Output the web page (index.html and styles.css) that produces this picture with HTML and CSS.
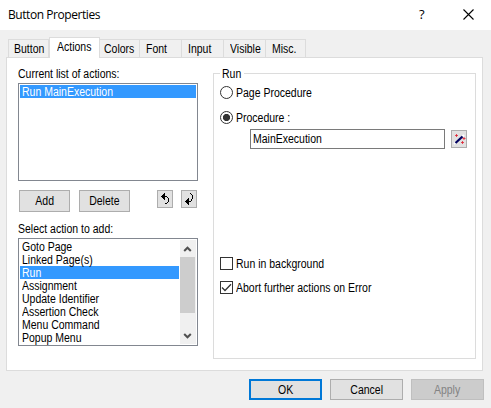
FILE: index.html
```html
<!DOCTYPE html>
<html lang="en">
<head>
<meta charset="utf-8">
<title>Button Properties</title>
<link rel="stylesheet" href="styles.css">
</head>
<body>
<div class="dialog">
  <header class="titlebar">
    <span class="title">Button Properties</span>
    <span class="help">?</span>
    <svg class="close" width="11" height="11" viewBox="0 0 11 11"><path d="M.5.5l10 10M10.5.5l-10 10"/></svg>
  </header>
  <nav class="tabs">
    <div class="tab tab-button"><span class="t">Button</span></div>
    <div class="tab active"><span class="t">Actions</span></div>
    <div class="tab tab-colors"><span class="t">Colors</span></div>
    <div class="tab tab-font"><span class="t">Font</span></div>
    <div class="tab tab-input"><span class="t">Input</span></div>
    <div class="tab tab-visible"><span class="t">Visible</span></div>
    <div class="tab tab-misc"><span class="t">Misc.</span></div>
  </nav>
  <main class="panel">
    <section class="left">
      <div class="label"><span class="t">Current list of actions:</span></div>
      <div class="list current">
        <div class="row selected"><span class="t">Run MainExecution</span></div>
      </div>
      <div class="tools">
        <button class="btn small"><span class="t">Add</span></button>
        <button class="btn small delete"><span class="t">Delete</span></button>
        <button class="btn icon up"><svg width="14" height="16" viewBox="0 0 14 16" shape-rendering="crispEdges"><path d="M3 5h1v1H3zM4 4h1v3H4zM5 3h1v5H5zM6 2h1v7H6zM7 5h2v1H7zM9 6h1v1H9zM10 7h1v4h-1zM9 11h1v1H9zM7 12h2v1H7z"/></svg></button>
        <button class="btn icon"><svg width="14" height="16" viewBox="0 0 14 16" shape-rendering="crispEdges"><path d="M8 2h1v1H8zM9 3h1v1H9zM10 4h1v4h-1zM9 8h1v2H9zM7 10h2v1H7zM3 10h1v1H3zM4 9h1v3H4zM5 8h1v5H5zM6 7h1v7H6z"/></svg></button>
      </div>
      <div class="label second"><span class="t">Select action to add:</span></div>
      <div class="list available">
        <div class="rows">
          <div class="row"><span class="t">Goto Page</span></div>
          <div class="row"><span class="t">Linked Page(s)</span></div>
          <div class="row selected"><span class="t">Run</span></div>
          <div class="row"><span class="t">Assignment</span></div>
          <div class="row"><span class="t">Update Identifier</span></div>
          <div class="row"><span class="t">Assertion Check</span></div>
          <div class="row"><span class="t">Menu Command</span></div>
          <div class="row"><span class="t">Popup Menu</span></div>
        </div>
        <div class="scrollbar">
          <svg width="15" height="17" viewBox="0 0 15 17"><path d="M4.2 11l3.3-3.3L10.8 11"/></svg>
          <div class="thumb"></div>
          <svg class="down" width="15" height="17" viewBox="0 0 15 17"><path d="M4.2 7l3.3 3.3L10.8 7"/></svg>
        </div>
      </div>
    </section>
    <section class="group">
      <div class="legend"><span class="t">Run</span></div>
      <div class="option page"><i class="radio"></i><span class="t">Page Procedure</span></div>
      <div class="option procedure"><i class="radio on"></i><span class="t">Procedure :</span></div>
      <div class="entry">
        <div class="field"><span class="t">MainExecution</span></div>
        <button class="btn icon"><svg width="14" height="16" viewBox="0 0 14 16"><path class="tip" d="M2 13l2-2M10.500 5.500l1.500-1.500"/><path class="wand" d="M3.500 12L10.500 5.500"/><path class="spark" d="M3 4.500h3M4.500 3v3M10.500 7.500h3M12 6v3M9 11.500h3M10.500 10v3"/></svg></button>
      </div>
      <div class="option background"><i class="check"></i><span class="t">Run in background</span></div>
      <div class="option abort"><i class="check"><svg width="11" height="11" viewBox="0 0 11 11"><path d="M1 5.500l3 3L10 2.300"/></svg></i><span class="t">Abort further actions on Error</span></div>
    </section>
  </main>
  <footer class="footer">
    <button class="btn primary"><span class="t">OK</span></button>
    <button class="btn"><span class="t">Cancel</span></button>
    <button class="btn disabled"><span class="t">Apply</span></button>
  </footer>
</div>
</body>
</html>
```
FILE: styles.css
```css
* { box-sizing: border-box; }
body { margin: 0; font: 12px/13px "Liberation Sans", Arial, sans-serif; color: #000; }
svg { display: block; flex: none; }
.dialog { width: 491px; height: 408px; background: #f0f0f0; overflow: hidden; }
.t { display: inline-block; white-space: nowrap; transform: scaleX(.875); transform-origin: 0 50%; }

.titlebar { display: flex; height: 30px; background: #fff; padding: 0 17px 0 8px; }
.title { flex: 1; font: 12px/30px "Open Sans", "Noto Sans", sans-serif; letter-spacing: -.44px; white-space: nowrap; }
.help { width: 8px; margin-right: 36px; font: 13px/28px "Open Sans", sans-serif; }
.close { margin-top: 9px; }
.close path { stroke: #000; stroke-width: 1.1; fill: none; }

.tabs { display: flex; align-items: flex-end; height: 28px; padding-left: 8px; }
.tab { height: 19px; padding: 3px 0 0 4px; border: 1px solid #dcdcdc; border-left: 0; }
.tab-button { width: 41px; border-left: 1px solid #dcdcdc; padding-left: 5px; }
.tab.active { position: relative; width: 51px; height: 21px; padding-left: 7px; background: #fff; border-left: 1px solid #dcdcdc; border-bottom: 0; }
.tab-colors { width: 40px; }
.tab-font { width: 42px; padding-left: 6px; }
.tab-input { width: 42px; padding-left: 6px; }
.tab-visible { width: 42px; padding-left: 6px; }
.tab-misc { width: 40px; padding-left: 6px; }

.panel { display: flex; width: 477px; height: 314px; margin: -1px 0 0 6px; background: #fff; border: 1px solid #dcdcdc; }
.left { width: 180px; margin-left: 11px; }
.label { height: 13px; margin-top: 10px; }
.list { width: 180px; border: 1px solid #828790; padding: 1px; background: #fff; }
.current { height: 98px; margin-top: 2px; }
.row { height: 13px; padding-left: 2px; line-height: 15px; }
.selected { background: #3399ff; color: #fff; }
.tools { display: flex; margin-top: 9px; padding: 0 1px; }
.btn { display: flex; align-items: center; justify-content: center; width: 73px; height: 21px; padding: 0; border: 1px solid #adadad; background: #e1e1e1; font: inherit; color: #000; }
.btn .t { margin-top: 2px; transform-origin: 50% 50%; }
.small { width: 51px; height: 22px; }
.small .t { margin-top: 0; }
.delete { margin-left: 9px; }
.icon { width: 16px; height: 18px; }
.icon.up { margin: 0 8px 0 27px; }
.second { margin-top: 11px; }
.available { display: flex; height: 108px; margin-top: 2px; }
.rows { width: 159px; }
.scrollbar { width: 16px; margin-left: 1px; background: #f0f0f0; display: flex; flex-direction: column; }
.scrollbar path { fill: none; stroke: #505050; stroke-width: 2; }
.thumb { width: 15px; height: 56px; background: #cdcdcd; }
.down { margin-top: auto; }

.group { width: 263px; height: 286px; margin: 15px 0 0 15px; border: 1px solid #dcdcdc; padding-left: 6px; }
.legend { width: 24px; height: 13px; margin-top: -6px; padding-left: 2px; background: #fff; }
.option { display: flex; align-items: center; height: 13px; }
.option .t { margin: 2px 0 0 3px; }
.page { margin-top: 5px; }
.procedure { margin-top: 12px; }
.radio, .check { display: block; flex: none; width: 13px; height: 13px; border: 1px solid #333; background: #fff; }
.radio { border-radius: 50%; }
.on { background: radial-gradient(circle, #333 3.200px, #fff 4px); }
.check path { fill: none; stroke: #333; stroke-width: 1.300; }
.entry { display: flex; align-items: center; margin: 5px 0 0 30px; }
.field { width: 195px; height: 20px; margin-right: 6px; padding: 3px 0 0 2px; border: 1px solid #7a7a7a; background: #fff; }
.tip { stroke: #fff; stroke-width: 2; }
.wand { stroke: #000060; stroke-width: 2.200; }
.spark { stroke: #e02030; stroke-width: .8; }
.background { margin-top: 108px; }
.abort { margin-top: 11px; }

.footer { display: flex; gap: 8px; margin: 8px 0 0 249px; }
.primary { border: 2px solid #0078d7; }
.disabled { border-color: #bfbfbf; background: #ccc; color: #838383; }
```
